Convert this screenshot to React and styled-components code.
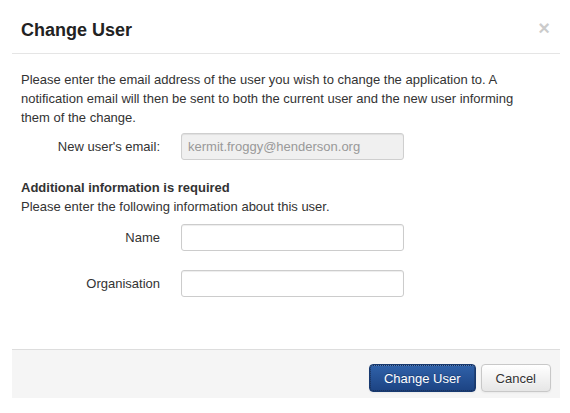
import styled, { createGlobalStyle } from "styled-components";

const GlobalStyle = createGlobalStyle`
  html, body {
    margin: 0;
    background: #fff;
  }
  body {
    font-family: "Liberation Sans", Arial, sans-serif;
    font-size: 13px;
    line-height: 19px;
    color: #333;
  }
`;

const Modal = styled.div`
  margin-left: 12px;
  width: 548px;
  background: #fff;
`;

const Header = styled.div`
  display: flex;
  align-items: center;
  justify-content: space-between;
  box-sizing: border-box;
  height: 54px;
  padding: 8px 10px 0 9px;
  border-bottom: 1px solid #e5e5e5;
`;

const Title = styled.h3`
  margin: 0;
  font-size: 18px;
  line-height: 27px;
  font-weight: bold;
  color: #222;
`;

const Close = styled.button`
  border: 0;
  background: none;
  padding: 0;
  margin-top: -5px;
  font-family: "Liberation Sans", Arial, sans-serif;
  font-size: 20px;
  font-weight: bold;
  line-height: 20px;
  color: #000;
  opacity: 0.2;
  cursor: pointer;
`;

const Body = styled.div`
  padding: 16px 15px 0 9px;
`;

const Intro = styled.p`
  margin: 0 0 6px;
`;

const Row = styled.div`
  display: flex;
  align-items: center;
  margin-top: ${(p) => p.$gap || 0}px;
`;

const Label = styled.label`
  width: 139px;
  text-align: right;
  color: #333;
`;

const Input = styled.input`
  box-sizing: border-box;
  width: 223px;
  height: 27px;
  margin-left: 21px;
  padding: 0 6px;
  font-family: "Liberation Sans", Arial, sans-serif;
  font-size: 13px;
  color: #555;
  background: #fff;
  border: 1px solid #ccc;
  border-radius: 3px;
  box-shadow: inset 0 1px 1px rgba(0, 0, 0, 0.075);
  outline: none;

  &:disabled {
    background: #f0f0f0;
    color: #999;
    border-color: #cfcfcf;
  }
`;

const SectionTitle = styled.div`
  margin-top: 18px;
  font-weight: bold;
  color: #333;
`;

const Help = styled.div`
  color: #333;
`;

const Footer = styled.div`
  display: flex;
  justify-content: flex-end;
  gap: 5px;
  margin-top: 52px;
  padding: 14px 9px 6px;
  background: #f5f5f5;
  border-top: 1px solid #ddd;
`;

const Button = styled.button`
  box-sizing: border-box;
  height: 28px;
  padding: 0 14px;
  font-family: "Liberation Sans", Arial, sans-serif;
  font-size: 13px;
  border-radius: 4px;
  cursor: pointer;
  color: ${(p) => (p.$primary ? "#fff" : "#333")};
  background: ${(p) =>
    p.$primary
      ? "linear-gradient(#3062aa, #1c4383)"
      : "linear-gradient(#ffffff, #e6e6e6)"};
  border: 1px solid ${(p) => (p.$primary ? "#183a70" : "#c8c8c8")};
  outline: ${(p) => (p.$primary ? "1px dotted #1a2f55" : "none")};
  outline-offset: -2px;
  text-shadow: ${(p) =>
    p.$primary ? "0 -1px 0 rgba(0,0,0,0.25)" : "0 1px 1px rgba(255,255,255,0.75)"};
  box-shadow: inset 0 1px 0 rgba(255, 255, 255, 0.2), 0 1px 2px rgba(0, 0, 0, 0.05);
`;

export default function App() {
  return (
    <>
      <GlobalStyle />
      <Modal>
        <Header>
          <Title>Change User</Title>
          <Close>×</Close>
        </Header>
        <Body>
          <Intro>
            Please enter the email address of the user you wish to change the
            application to. A notification email will then be sent to both the
            current user and the new user informing them of the change.
          </Intro>
          <Row>
            <Label>New user's email:</Label>
            <Input disabled value="kermit.froggy@henderson.org" readOnly />
          </Row>
          <SectionTitle>Additional information is required</SectionTitle>
          <Help>Please enter the following information about this user.</Help>
          <Row $gap={8}>
            <Label>Name</Label>
            <Input />
          </Row>
          <Row $gap={19}>
            <Label>Organisation</Label>
            <Input />
          </Row>
        </Body>
        <Footer>
          <Button $primary>Change User</Button>
          <Button>Cancel</Button>
        </Footer>
      </Modal>
    </>
  );
}
